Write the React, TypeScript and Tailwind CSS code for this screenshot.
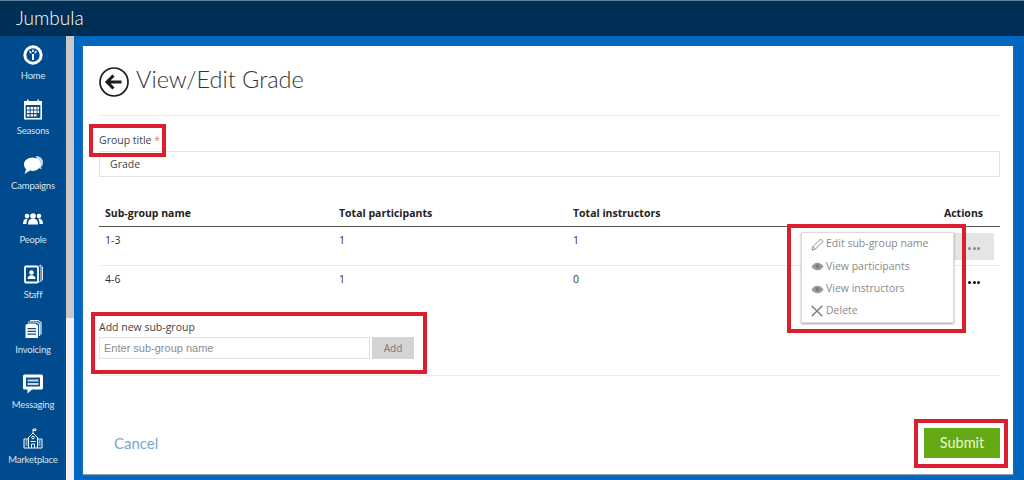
import React from 'react';

const HomeIcon = () => (
  <svg width="20" height="20" viewBox="0 0 20 20">
    <circle cx="10" cy="10" r="8.2" fill="none" stroke="#fff" strokeWidth="3" />
    <path d="M9 9h2v6H9z M6 6.5l1.2-1 1.6 2.6-1 .7z M14 6.5l-1.2-1-1.6 2.6 1 .7z M9.2 4.5h1.6v2.6H9.2z" fill="#fff" />
  </svg>
);

const SeasonsIcon = () => (
  <svg width="20" height="21" viewBox="0 0 20 21">
    <path d="M1 2h3V0.5h1.5V2h9V0.5H16V2h3v18.5H1z" fill="#fff" />
    <path d="M2.6 6h14.8v13H2.6z" fill="#0a4d8f" />
    <path d="M4 8h2.6v2.4H4zM7.6 8h2.6v2.4H7.6zM11 8h2.6v2.4H11zM14.4 8H16v2.4h-1.6zM4 11.6h2.6V14H4zM7.6 11.6h2.6V14H7.6zM11 11.6h2.6V14H11zM14.4 11.6H16V14h-1.6zM4 15.2h2.6v2.4H4zM7.6 15.2h2.6v2.4H7.6zM11 15.2h2.6v2.4H11z" fill="#fff" />
  </svg>
);

const CampaignsIcon = () => (
  <svg width="21" height="20" viewBox="0 0 21 20">
    <path d="M13 1c4 0 7 2.600 7 6.500 0 2-.8 3.500-2 4.700l.8 2.300-3-1.400z" fill="#c9d8e8" />
    <path d="M9.500 2.500c4.600 0 8 3 8 6.700s-3.400 6.700-8 6.700c-.9 0-1.700-.1-2.500-.3L1.500 19l1.600-4.800C1.800 13 1 11.200 1 9.200c0-3.700 3.900-6.700 8.500-6.700z" fill="#fff" />
  </svg>
);

const PeopleIcon = () => (
  <svg width="20" height="12" viewBox="0 0 20 12">
    <circle cx="4" cy="3" r="2.300" fill="#fff" />
    <circle cx="16" cy="3" r="2.300" fill="#fff" />
    <circle cx="10" cy="3" r="2.800" fill="#fff" />
    <path d="M0 11c0-3 1.200-5 3-5.200h2C3.800 7 3.500 9 3.500 11zM20 11c0-3-1.200-5-3-5.200h-2c1.200 1.200 1.500 3.200 1.500 5.200z" fill="#fff" />
    <path d="M5 11.500c0-3.500 1.600-5.500 3.500-5.700h3c1.900.2 3.500 2.200 3.500 5.700z" fill="#fff" />
  </svg>
);

const StaffIcon = () => (
  <svg width="19" height="20" viewBox="0 0 19 20">
    <path d="M15 2l2-1v16l-2 1M17.500 3.500l1-.5v13l-1 .8" fill="none" stroke="#dfe8f1" strokeWidth="1" />
    <rect x="1" y="2.500" width="13" height="16" rx="1" fill="none" stroke="#fff" strokeWidth="1.800" />
    <circle cx="7.500" cy="8.500" r="2.300" fill="#fff" />
    <path d="M3.500 15c0-2.500 1.600-3.800 4-3.800s4 1.300 4 3.800z" fill="#fff" />
  </svg>
);

const InvoicingIcon = () => (
  <svg width="18" height="20" viewBox="0 0 18 20">
    <path d="M6 1.500h8l3 2v12M4 3h8.500l3 2v12" fill="none" stroke="#e4ecf4" strokeWidth="1.200" />
    <path d="M1.500 6L4 4.500h7.500L14 6.500V19H1.500z" fill="#fff" />
    <path d="M3.500 9h8.500v1.300H3.500zM3.500 11.700h8.500V13H3.500zM3.500 14.400h8.500v1.300H3.500z" fill="#0a4d8f" />
  </svg>
);

const MessagingIcon = () => (
  <svg width="20" height="20" viewBox="0 0 20 20">
    <path d="M1.500 0.500h17a1.500 1.500 0 0 1 1.500 1.500v12a1.500 1.500 0 0 1-1.500 1.500H9L4.500 19.500v-4h-3A1.500 1.500 0 0 1 0 14V2A1.500 1.500 0 0 1 1.500 0.500z" fill="#fff" />
    <path d="M3 3.500h14v9H3z" fill="#0a4d8f" />
    <path d="M4.500 5.500h11v2h-11zM4.500 9h11v2h-11z" fill="#c9d8e8" />
  </svg>
);

const MarketplaceIcon = () => (
  <svg width="20" height="21" viewBox="0 0 20 21" fill="none" stroke="#fff" strokeWidth="1">
    <path d="M10 5V1h3v1.500h-3" />
    <path d="M5.500 9.500L10 5l4.500 4.500" />
    <path d="M5.500 9v11M14.500 9v11" />
    <path d="M1 11h4.500M14.500 11H19M1 11v9h18v-9" />
    <path d="M2.500 13h2M2.500 15h2M2.500 17h2M15.500 13h2M15.500 15h2M15.500 17h2M7.500 13.500h5M8.500 16v4M11.500 16v4M8.500 16h3" />
    <circle cx="10" cy="9.500" r="1.300" />
  </svg>
);

const BackIcon = () => (
  <svg width="30" height="30" viewBox="0 0 30 30">
    <circle cx="15" cy="15" r="14" fill="none" stroke="#1c1c1c" strokeWidth="1.700" />
    <path d="M22.500 15H9M14.500 8.500L8 15l6.500 6.500" fill="none" stroke="#1c1c1c" strokeWidth="3" />
  </svg>
);

const EyeIcon = () => (
  <svg width="13" height="9" viewBox="0 0 13 9" className="shrink-0">
    <path d="M0.500 4.500C2 2 4 0.700 6.500 0.700s4.500 1.300 6 3.800c-1.500 2.500-3.500 3.800-6 3.800s-4.500-1.300-6-3.800z" fill="#9a9a9a" />
    <circle cx="6.500" cy="4.300" r="2" fill="#7d7d7d" />
  </svg>
);

const PencilIcon = () => (
  <svg width="13" height="13" viewBox="0 0 13 13" fill="none" stroke="#8f8f8f" strokeWidth="1" className="shrink-0">
    <path d="M1 12l1-3.500L9.500 1 12 3.500 4.500 11z" />
    <path d="M2 8.500L4.500 11" />
  </svg>
);

const CrossIcon = () => (
  <svg width="12" height="12" viewBox="0 0 12 12" fill="none" stroke="#7a7a7a" strokeWidth="1.400" className="shrink-0">
    <path d="M0.700 0.700l10.600 10.600M11.300 0.700L0.700 11.300" />
  </svg>
);

const navItems = [
  { label: 'Home', icon: <HomeIcon /> },
  { label: 'Seasons', icon: <SeasonsIcon /> },
  { label: 'Campaigns', icon: <CampaignsIcon /> },
  { label: 'People', icon: <PeopleIcon /> },
  { label: 'Staff', icon: <StaffIcon /> },
  { label: 'Invoicing', icon: <InvoicingIcon /> },
  { label: 'Messaging', icon: <MessagingIcon /> },
  { label: 'Marketplace', icon: <MarketplaceIcon /> },
];

const rows = [
  { name: '1-3', participants: '1', instructors: '1' },
  { name: '4-6', participants: '1', instructors: '0' },
];

const RedBox = ({ className }: { className: string }) => (
  <div className={`absolute border-4 border-[#dc1f30] pointer-events-none ${className}`} />
);

export default function App() {
  return (
    <div className="relative w-[1024px] h-[480px] overflow-hidden bg-[#0066bf] font-['Open_Sans',sans-serif] text-[10.5px] text-[#333]">
      {/* Top bar */}
      <div className="h-[36px] bg-[#002f56] border-t border-[#5c7f9c] flex items-center pl-[16px]">
        <span className="font-['Lato',sans-serif] text-[19px] font-light text-white">Jumbula</span>
      </div>

      <div className="flex h-[444px]">
        {/* Sidebar */}
        <div className="w-[66px] bg-[#004b8d] flex flex-col items-center pt-[8px]">
          {navItems.map(item => (
            <div key={item.label} className="h-[54.8px] w-full shrink-0 flex flex-col items-center text-[#d8e4ef]">
              <div className="h-[22px] flex items-center justify-center">{item.icon}</div>
              <span className="mt-[3px] font-['Lato',sans-serif] text-[9.5px] tracking-[-0.2px] leading-[14px]">{item.label}</span>
            </div>
          ))}
        </div>

        {/* Scrollbar */}
        <div className="w-[8px] bg-[#f0f0f0]">
          <div className="h-[282px] bg-[#c8c8c8]" />
        </div>

        {/* Page */}
        <div className="flex-1 pl-[9px] pr-[11px] pt-[10px] pb-[6px]">
          <div className="relative h-full bg-white shadow-[0_1px_1px_#8a9aa8] pl-[16px] pr-[13px] flex flex-col">
            <div className="h-[70px] border-b border-[#ececec] flex items-start pt-[21px]">
              <BackIcon />
              <h1 className="ml-[7px] -mt-[5px] font-['Lato',sans-serif] font-light text-[23.5px] leading-[34px] text-[#333]">View/Edit Grade</h1>
            </div>

            <label className="mt-[16px] text-[10.5px] leading-[16px] text-[#444]">
              Group title <span className="text-[#e0827f]">*</span>
            </label>
            <input
              readOnly
              value="Grade"
              className="mt-[3px] h-[26px] border border-[#e2e2e2] px-[10px] text-[10.5px] text-[#444] outline-none"
            />

            <table className="mt-[26px] w-full table-fixed border-collapse text-left">
              <thead>
                <tr className="h-[23px] border-b border-[#555] font-bold text-[#222]">
                  <th className="w-[234px] pl-[6px] font-bold">Sub-group name</th>
                  <th className="w-[234px] pl-[6px] font-bold">Total participants</th>
                  <th className="pl-[6px] font-bold">Total instructors</th>
                  <th className="w-[120px] pr-[17px] text-right font-bold">Actions</th>
                </tr>
              </thead>
              <tbody>
                {rows.map((row, i) => (
                  <tr key={row.name} className={i === 0 ? 'h-[39px] border-b border-[#ececec]' : 'h-[28px]'}>
                    <td className="pl-[6px] align-top pt-[6px]">{row.name}</td>
                    <td className="pl-[6px] align-top pt-[6px]">{row.participants}</td>
                    <td className="pl-[6px] align-top pt-[6px]">{row.instructors}</td>
                    <td className="align-top pt-[6px]">
                      <div className="flex justify-end pr-[6px]">
                        <div className={`w-[40px] flex justify-center gap-[1.500px] ${i === 0 ? 'h-[27px] bg-[#e5e5e5] pt-[14px]' : 'pt-[9px]'}`}>
                          <span className={`w-[3px] h-[3px] rounded-full ${i === 0 ? 'bg-[#8a8a8a]' : 'bg-[#111]'}`} />
                          <span className={`w-[3px] h-[3px] rounded-full ${i === 0 ? 'bg-[#8a8a8a]' : 'bg-[#111]'}`} />
                          <span className={`w-[3px] h-[3px] rounded-full ${i === 0 ? 'bg-[#8a8a8a]' : 'bg-[#111]'}`} />
                        </div>
                      </div>
                    </td>
                  </tr>
                ))}
              </tbody>
            </table>

            <div className="mt-[26px] leading-[16px] text-[#444]">Add new sub-group</div>
            <div className="mt-[2px] flex gap-[2px]">
              <input
                readOnly
                placeholder="Enter sub-group name"
                className="w-[271px] h-[22px] border border-[#e4e4e4] px-[4px] font-['Liberation_Sans',sans-serif] text-[11px] outline-none placeholder:text-[#8c8c8c]"
              />
              <button className="w-[42px] h-[22px] bg-[#d4d4d4] text-[#777] text-[10px]">Add</button>
            </div>

            <div className="mt-[16px] border-b border-[#ececec]" />

            <div className="mt-[52px] flex items-center justify-between pl-[15px]">
              <a className="font-['Lato',sans-serif] text-[15px] text-[#7aa6cc]">Cancel</a>
              <button className="w-[76px] h-[30px] bg-[#64a914] text-[#e8f7c8] font-['Lato',sans-serif] text-[14.500px]">Submit</button>
            </div>

            {/* Actions menu */}
            <div className="absolute left-[718px] top-[186px] w-[153px] h-[91px] bg-white border border-[#dcdcdc] shadow-[0_1px_2px_rgba(0,0,0,0.35)] pl-[9px] text-[#8a8a8a] text-[10.5px]">
              <div className="h-[22px] flex items-center gap-[2px]"><PencilIcon />Edit sub-group name</div>
              <div className="h-[23px] flex items-center gap-[2px]"><EyeIcon />View participants</div>
              <div className="h-[22px] flex items-center gap-[2px]"><EyeIcon />View instructors</div>
              <div className="h-[22px] flex items-center gap-[3px]"><CrossIcon />Delete</div>
            </div>
          </div>
        </div>
      </div>

      {/* Annotation boxes */}
      <RedBox className="left-[89px] top-[124px] w-[77px] h-[33px]" />
      <RedBox className="left-[91px] top-[312px] w-[336px] h-[62px]" />
      <RedBox className="left-[787px] top-[224px] w-[179px] h-[109px]" />
      <RedBox className="left-[914px] top-[419px] w-[94px] h-[49px]" />
    </div>
  );
}
